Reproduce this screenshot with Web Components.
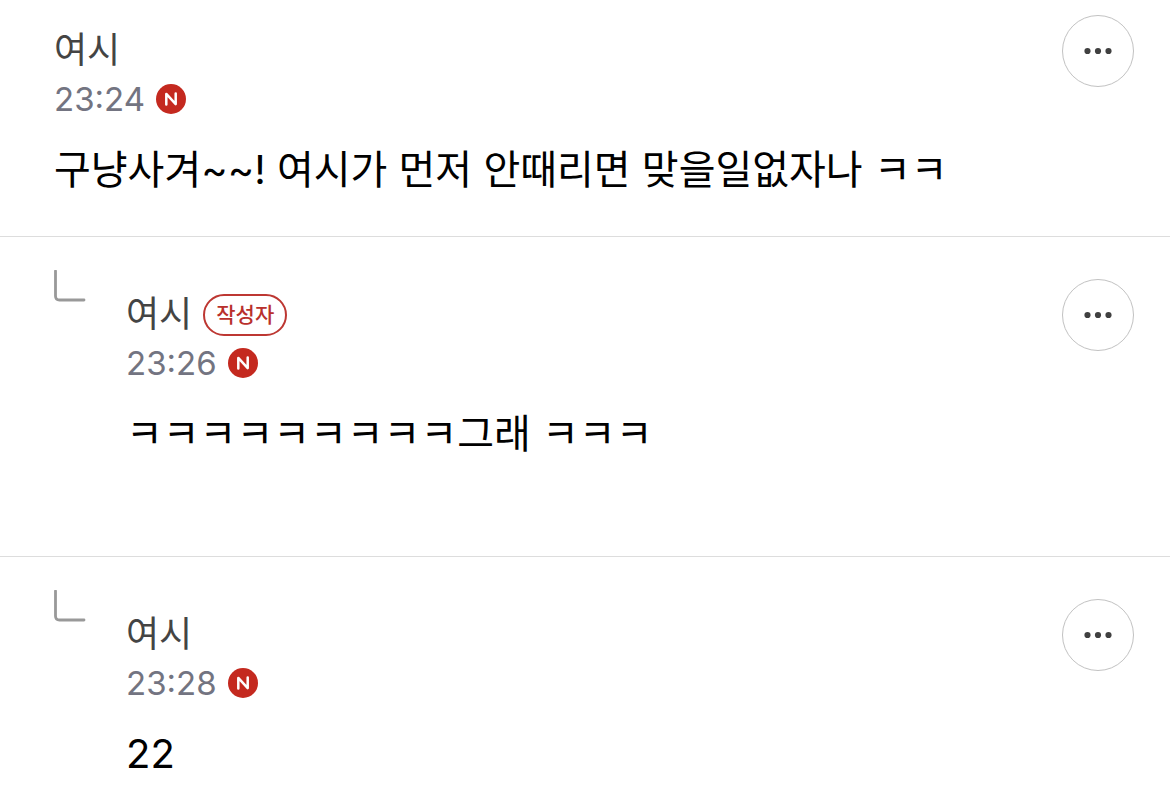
<!DOCTYPE html>
<html lang="ko">
<head>
<meta charset="utf-8">
<meta name="viewport" content="width=device-width, initial-scale=1">
<title>댓글</title>
<style>
body{margin:0;background:#fff;font-family:Inter,"Noto Sans CJK KR",sans-serif}
</style>
</head>
<body>
<comment-list>
<comment-item author="여시" time="23:24">구냥사겨~~! 여시가 먼저 안때리면 맞을일없자나 ㅋㅋ</comment-item>
<comment-item reply writer author="여시" time="23:26">ㅋㅋㅋㅋㅋㅋㅋㅋㅋ그래 ㅋㅋㅋ</comment-item>
<comment-item reply author="여시" time="23:28">22</comment-item>
</comment-list>
<script>
class NewBadge extends HTMLElement{
  constructor(){super();this.attachShadow({mode:"open"}).innerHTML=`
<style>:host{display:block;width:30px;height:30px}svg{display:block}</style>
<svg width="30" height="30" viewBox="0 0 30 30" role="img" aria-label="새 댓글"><circle cx="15" cy="15" r="15" fill="#c4291f"/><path d="M10.3 20.4V9.9L19.7 20.1V9.6" fill="none" stroke="#fff" stroke-width="2.5" stroke-linecap="round" stroke-linejoin="round"/></svg>`}
}
customElements.define("new-badge",NewBadge);

class MoreButton extends HTMLElement{
  constructor(){super();this.attachShadow({mode:"open"}).innerHTML=`
<style>:host{display:block}
button{display:grid;place-items:center;width:72px;height:72px;padding:0;border:1px solid #c2c2c2;border-radius:50%;background:#fff;cursor:pointer}
svg{display:block}</style>
<button type="button" aria-label="더보기"><svg width="28" height="8" viewBox="0 0 28 8" fill="#404040"><circle cx="3.5" cy="4" r="3.1"/><circle cx="14" cy="4" r="3.1"/><circle cx="24.5" cy="4" r="3.1"/></svg></button>`}
}
customElements.define("more-button",MoreButton);

class CommentItem extends HTMLElement{
  connectedCallback(){
    if(this.shadowRoot)return;
    const reply=this.hasAttribute("reply");
    this.attachShadow({mode:"open"}).innerHTML=`
<style>
:host{display:flex;align-items:flex-start;padding:15px 36px 41px 54px}
:host([reply]){padding:33px 36px 97px 54px}
.mark{flex:0 0 72px}
.mark svg{display:block}
.body{flex:1;min-width:0;padding-top:12px}
:host([reply]) .body{padding-top:21px}
more-button{flex:none}
:host([reply]) more-button{margin-top:9px}
.head{display:flex;align-items:center;gap:11px;height:48px}
.name{font-size:36px;line-height:48px;padding-bottom:2px;color:#444}
.tag{box-sizing:border-box;height:42px;padding:0 11px;border:2px solid #bd3732;border-radius:21px;font-size:21px;font-weight:500;line-height:38px;color:#b9302c}
.meta{display:flex;align-items:center;gap:11px;height:48px}
time{font-size:33px;line-height:48px;color:#737481}
p{margin:22px 0 0;font-size:40px;line-height:50px;color:#000}
</style>
${reply?`<div class="mark"><svg width="32" height="32" viewBox="0 0 32 32" aria-hidden="true"><path d="M1.5 1V26Q1.5 30 5.5 30H30" fill="none" stroke="#999" stroke-width="2.8" stroke-linecap="round"/></svg></div>`:""}
<div class="body"><div class="head"><span class="name">${this.getAttribute("author")}</span>${this.hasAttribute("writer")?`<span class="tag">작성자</span>`:""}</div>
<div class="meta"><time>${this.getAttribute("time")}</time><new-badge></new-badge></div>
<p><slot></slot></p></div><more-button></more-button>`}
}
customElements.define("comment-item",CommentItem);

class CommentList extends HTMLElement{
  constructor(){super();this.attachShadow({mode:"open"}).innerHTML=`
<style>:host{display:block}
::slotted(comment-item:not(:last-child)){border-bottom:1px solid #ddd}
::slotted(comment-item:last-child){padding-bottom:28px}</style><slot></slot>`}
}
customElements.define("comment-list",CommentList);
</script>
</body>
</html>
